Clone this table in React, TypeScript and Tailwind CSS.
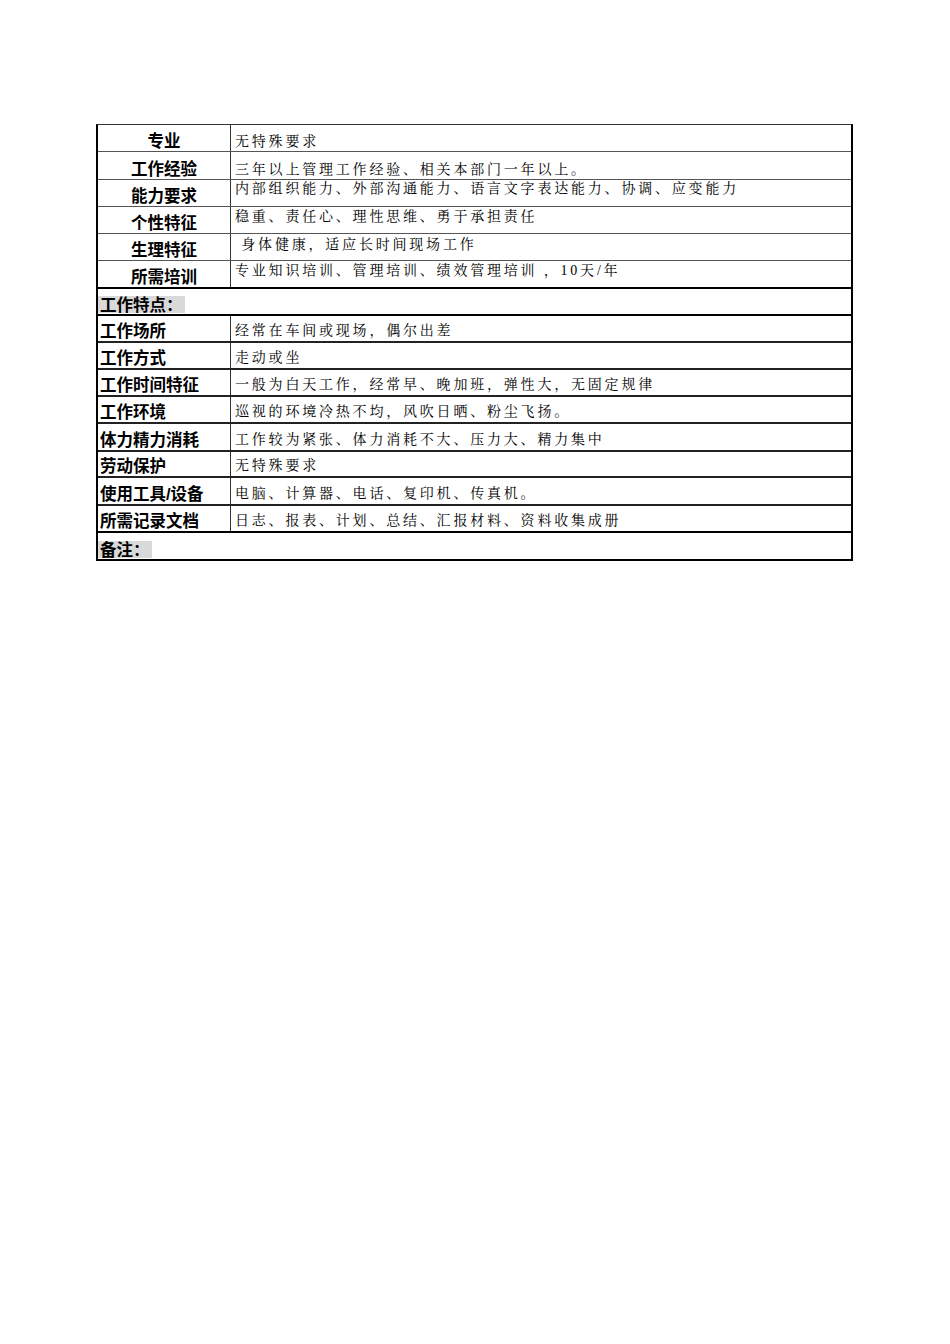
const valueFont = {
  fontFamily: '"Liberation Serif", "Noto Serif CJK SC", "Noto Sans CJK SC", serif',
};

type Row = {
  label: string;
  value: string;
  h: string;
  vpad: string;
};

// 上半部分：标签居中
const topRows: Row[] = [
  { label: "专业", value: "无特殊要求", h: "h-[27px]", vpad: "pt-[10px]" },
  { label: "工作经验", value: "三年以上管理工作经验、相关本部门一年以上。", h: "h-[28px]", vpad: "pt-[11px]" },
  { label: "能力要求", value: "内部组织能力、外部沟通能力、语言文字表达能力、协调、应变能力", h: "h-[27px]", vpad: "pt-[2px]" },
  { label: "个性特征", value: "稳重、责任心、理性思维、勇于承担责任", h: "h-[27px]", vpad: "pt-[3px]" },
  { label: "生理特征", value: "\u00a0身体健康，适应长时间现场工作", h: "h-[27px]", vpad: "pt-[4px]" },
  { label: "所需培训", value: "专业知识培训、管理培训、绩效管理培训 ，10天/年", h: "h-[28px]", vpad: "pt-[3px]" },
];

// 下半部分：标签左对齐
const bottomRows: { label: string; value: string; h: string }[] = [
  { label: "工作场所", value: "经常在车间或现场，偶尔出差", h: "h-[27px]" },
  { label: "工作方式", value: "走动或坐", h: "h-[27px]" },
  { label: "工作时间特征", value: "一般为白天工作，经常早、晚加班，弹性大，无固定规律", h: "h-[27px]" },
  { label: "工作环境", value: "巡视的环境冷热不均，风吹日晒、粉尘飞扬。", h: "h-[27px]" },
  { label: "体力精力消耗", value: "工作较为紧张、体力消耗不大、压力大、精力集中", h: "h-[28px]" },
  { label: "劳动保护", value: "无特殊要求", h: "h-[26px]" },
  { label: "使用工具/设备", value: "电脑、计算器、电话、复印机、传真机。", h: "h-[28px]" },
  { label: "所需记录文档", value: "日志、报表、计划、总结、汇报材料、资料收集成册", h: "h-[27px]" },
];

const labelCls =
  "font-bold text-[16.5px] leading-none text-black font-['Liberation_Sans','Noto_Sans_CJK_SC',sans-serif]";

export default function App() {
  return (
    <div className="min-h-[1344px] w-[950px] bg-white pt-[124px] pl-[96px]">
      <div className="w-[757px] border-x-2 border-t border-b-2 border-black border-t-[#333]">
        {topRows.map((r, i) => (
          <div
            key={r.label}
            className={`flex ${r.h} ${
              i === topRows.length - 1 ? "border-b-2 border-black" : "border-b border-[#555]"
            }`}
          >
            <div className={`w-[133px] shrink-0 border-r border-[#333] flex items-end justify-center pb-[2px] ${labelCls}`}>
              {r.label}
            </div>
            <div
              className={`flex-1 pl-[4px] ${r.vpad} text-[14px] leading-none tracking-[2.8px] text-black whitespace-pre`}
              style={valueFont}
            >
              {r.value}
            </div>
          </div>
        ))}

        <div className="flex h-[27px] items-end border-b-2 border-black pb-[1px]">
          <span className={`bg-[#d9d9d9] px-[2px] pt-[1px] ${labelCls}`}>工作特点：</span>
        </div>

        {bottomRows.map((r, i) => (
          <div
            key={r.label}
            className={`flex ${r.h} ${
              i === bottomRows.length - 1 ? "border-b-2 border-black" : "border-b-2 border-[#222]"
            }`}
          >
            <div className={`w-[133px] shrink-0 border-r border-[#333] flex items-end pl-[2px] pb-[2px] ${labelCls}`}>
              {r.label}
            </div>
            <div
              className="flex-1 flex items-end pl-[4px] pb-[3px] text-[14px] leading-none tracking-[2.8px] text-black whitespace-pre"
              style={valueFont}
            >
              {r.value}
            </div>
          </div>
        ))}

        <div className="flex h-[26px] items-end pb-[1px]">
          <span className={`bg-[#d9d9d9] px-[2px] pt-[1px] ${labelCls}`}>备注：</span>
        </div>
      </div>
    </div>
  );
}
